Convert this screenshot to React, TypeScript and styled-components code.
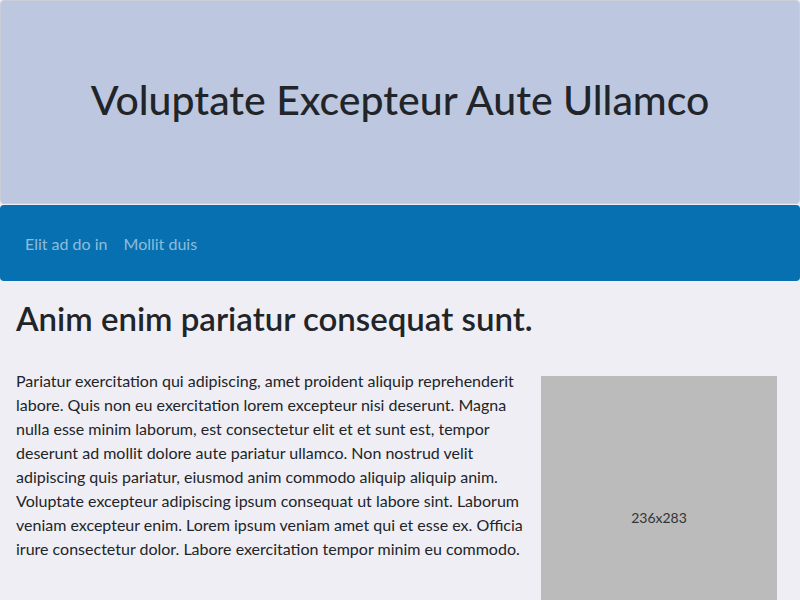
import React from "react";
import styled, { createGlobalStyle } from "styled-components";

const Global = createGlobalStyle`
  html, body { margin: 0; padding: 0; }
  body {
    background: #f0eef5;
    font-family: Lato, "Open Sans", sans-serif;
    color: #212529;
  }
`;

const Page = styled.div`
  display: flex;
  flex-direction: column;
  width: 800px;
  height: 600px;
  overflow: hidden;
`;

const Header = styled.header`
  flex: 0 0 auto;
  box-sizing: border-box;
  height: 204px;
  background: #bdc8e0;
  border: 1px solid #c9ced9;
  border-radius: 4px;
  display: flex;
  align-items: center;
  justify-content: center;
`;

const Title = styled.h1`
  margin: 0 0 4px;
  font-size: 41px;
  font-weight: 500;
  line-height: 1.2;
  color: #212529;
`;

const Nav = styled.nav`
  flex: 0 0 auto;
  box-sizing: border-box;
  margin-top: 1px;
  height: 76px;
  background: #0670b0;
  border-radius: 4px;
  display: flex;
  align-items: center;
  padding: 0 17px;
`;

const NavLink = styled.a`
  color: rgba(255, 255, 255, 0.55);
  font-size: 16px;
  padding: 8px;
  text-decoration: none;
`;

const Main = styled.main`
  flex: 1 1 auto;
  padding: 0 23px 0 16px;
`;

const Heading = styled.h2`
  margin: 18px 0 30px;
  font-size: 33px;
  font-weight: 600;
  line-height: 1.2;
`;

const Row = styled.div`
  display: flex;
  align-items: flex-start;
  gap: 11px;
`;

const Text = styled.p`
  flex: 1;
  margin: 0;
  font-size: 16px;
  line-height: 24px;
`;

const Placeholder = styled.div`
  flex: 0 0 236px;
  height: 283px;
  margin-top: 7px;
  background: #bbbbbb;
  display: flex;
  align-items: center;
  justify-content: center;
  font-size: 14px;
  color: #333;
`;

export default function App() {
  return (
    <Page>
      <Global />
      <Header>
        <Title>Voluptate Excepteur Aute Ullamco</Title>
      </Header>
      <Nav>
        <NavLink href="#">Elit ad do in</NavLink>
        <NavLink href="#">Mollit duis</NavLink>
      </Nav>
      <Main>
        <Heading>Anim enim pariatur consequat sunt.</Heading>
        <Row>
          <Text>
            Pariatur exercitation qui adipiscing, amet proident aliquip reprehenderit labore. Quis non eu exercitation lorem excepteur nisi deserunt. Magna nulla esse minim laborum, est consectetur elit et et sunt est, tempor deserunt ad mollit dolore aute pariatur ullamco. Non nostrud velit adipiscing quis pariatur, eiusmod anim commodo aliquip aliquip anim. Voluptate excepteur adipiscing ipsum consequat ut labore sint. Laborum veniam excepteur enim. Lorem ipsum veniam amet qui et esse ex. Officia irure consectetur dolor. Labore exercitation tempor minim eu commodo.
          </Text>
          <Placeholder>236x283</Placeholder>
        </Row>
      </Main>
    </Page>
  );
}
